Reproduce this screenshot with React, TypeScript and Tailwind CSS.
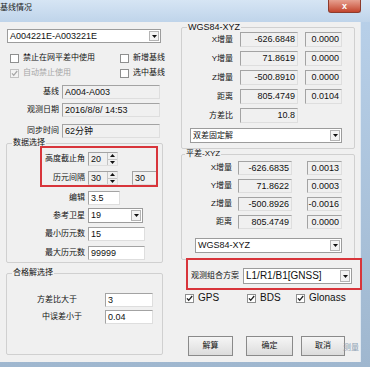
import type { ReactNode } from "react";

const edge = "border border-t-[#a3a3a3] border-l-[#a3a3a3] border-r-[#dedede] border-b-[#dedede]";

function Arrow({ up = false }: { up?: boolean }) {
  return (
    <svg width="5" height="3" viewBox="0 0 5 3" aria-hidden>
      <path d={up ? "M0 3h5L2.5 0z" : "M0 0h5L2.5 3z"} fill="#111" />
    </svg>
  );
}

function Field({
  value,
  className = "",
  white = false,
  right = false,
}: {
  value: string;
  className?: string;
  white?: boolean;
  right?: boolean;
}) {
  return (
    <div
      className={`flex shrink-0 items-center px-[2px] ${edge} ${white ? "bg-white" : "bg-[#f0f0f0]"} ${right ? "justify-end" : ""} ${className}`}
    >
      <span className="whitespace-nowrap text-[9px] leading-none">{value}</span>
    </div>
  );
}

function Combo({ value, className = "", big = false }: { value: string; className?: string; big?: boolean }) {
  return (
    <div className={`flex shrink-0 items-stretch border border-[#9c9c9c] bg-white ${className}`}>
      <span
        className={`flex flex-1 items-center whitespace-nowrap pl-[2px] leading-none ${big ? "text-[10px]" : "text-[9px]"}`}
      >
        {value}
      </span>
      <span className="m-[1px] flex w-[10px] items-center justify-center border border-[#b4b4b4] bg-[#f3f3f3]">
        <Arrow />
      </span>
    </div>
  );
}

function Spinner({ value }: { value: string }) {
  return (
    <div className={`flex h-[14px] w-[30px] shrink-0 items-stretch bg-[#f0f0f0] ${edge}`}>
      <span className="flex flex-1 items-center pl-[2px] text-[9px] leading-none">{value}</span>
      <span className="flex w-[10px] flex-col border-l border-[#c4c4c4]">
        <span className="flex flex-1 items-center justify-center border-b border-[#c4c4c4]">
          <Arrow up />
        </span>
        <span className="flex flex-1 items-center justify-center">
          <Arrow />
        </span>
      </span>
    </div>
  );
}

function Check({
  label,
  checked = false,
  disabled = false,
  latin = false,
  className = "",
}: {
  label: string;
  checked?: boolean;
  disabled?: boolean;
  latin?: boolean;
  className?: string;
}) {
  return (
    <div className={`flex items-center ${className}`}>
      <span
        className={`flex h-[9px] w-[9px] shrink-0 items-center justify-center border ${disabled ? "border-[#c2c2c2] bg-[#f3f3f3]" : "border-[#8e8f8f] bg-white"}`}
      >
        {checked && (
          <svg width="7" height="7" viewBox="0 0 7 7" aria-hidden>
            <path
              d="M1 3.4l1.7 1.9L6.2 1"
              stroke={disabled ? "#a8a8a8" : "#222"}
              strokeWidth="1.3"
              fill="none"
            />
          </svg>
        )}
      </span>
      <span
        className={`ml-[4px] whitespace-nowrap leading-none ${latin ? "text-[10px]" : "text-[8px]"} ${disabled ? "text-[#a6a6a6]" : ""}`}
      >
        {label}
      </span>
    </div>
  );
}

function Group({ title, className = "", children, latin = false, indent = "ml-[5px]" }: {
  title: string;
  className?: string;
  children: ReactNode;
  latin?: boolean;
  indent?: string;
}) {
  return (
    <fieldset className={`rounded-[2px] border border-[#d0d0d0] ${className}`}>
      <legend className={`${indent} px-[1px] leading-[10px] ${latin ? "text-[9px]" : "text-[8px]"}`}>{title}</legend>
      {children}
    </fieldset>
  );
}

function Button({ label, className = "" }: { label: string; className?: string }) {
  return (
    <div
      className={`flex h-[20px] shrink-0 items-center justify-center border border-[#8a8a8a] bg-gradient-to-b from-[#f6f6f6] to-[#dcdcdc] text-[8px] leading-none ${className}`}
    >
      {label}
    </div>
  );
}

function InfoRow({ label, value, className = "" }: { label: string; value: string; className?: string }) {
  return (
    <div className={`flex h-[14px] items-center ${className}`}>
      <span className="w-[59px] text-right text-[8px] leading-none">{label}</span>
      <Field value={value} className="ml-[3px] h-[14px] w-[98px]" />
    </div>
  );
}

function DataRow({ label, children, className = "" }: { label: string; children: ReactNode; className?: string }) {
  return (
    <div className={`flex items-center ${className}`}>
      <span className="w-[78px] text-right text-[8px] leading-none">{label}</span>
      <div className="ml-[3px] flex items-center">{children}</div>
    </div>
  );
}

function LeftColumn() {
  return (
    <div className="flex w-[181px] shrink-0 flex-col">
      <Combo value="A004221E-A003221E" className="ml-[7px] mt-[7px] h-[14px] w-[154px]" />

      <div className="mt-[9px] flex h-[12px] items-center">
        <Check label="禁止在网平差中使用" className="ml-[10px] w-[110px]" />
        <Check label="新增基线" />
      </div>
      <div className="mt-[3px] flex h-[12px] items-center">
        <Check label="自动禁止使用" checked disabled className="ml-[10px] w-[110px]" />
        <Check label="选中基线" />
      </div>

      <InfoRow label="基线" value="A004-A003" className="mt-[6px]" />
      <InfoRow label="观测日期" value="2016/8/8/ 14:53" className="mt-[4px]" />
      <InfoRow label="同步时间" value="62分钟" className="mt-[7px]" />

      <Group title="数据选择" className="ml-[6px] w-[157px] pb-[2px]">
        <DataRow label="高度截止角" className="mt-[4px] h-[14px]">
          <Spinner value="20" />
        </DataRow>
        <DataRow label="历元间隔" className="mt-[5px] h-[14px]">
          <Spinner value="30" />
          <Field value="30" className="ml-[14px] h-[14px] w-[25px]" />
        </DataRow>
        <DataRow label="编辑" className="mt-[6px] h-[14px]">
          <Field value="3.5" white className="h-[14px] w-[32px]" />
        </DataRow>
        <DataRow label="参考卫星" className="mt-[3px] h-[15px]">
          <Combo value="19" className="h-[15px] w-[55px]" />
        </DataRow>
        <DataRow label="最小历元数" className="mt-[4px] h-[14px]">
          <Field value="15" white className="h-[14px] w-[57px]" />
        </DataRow>
        <DataRow label="最大历元数" className="mt-[5px] h-[14px]">
          <Field value="99999" white className="h-[14px] w-[57px]" />
        </DataRow>
      </Group>

      <Group title="合格解选择" className="ml-[6px] mt-[5px] w-[157px] pb-[30px]">
        <div className="mt-[15px] flex h-[14px] items-center">
          <span className="w-[98px] pl-[30px] text-[8px] leading-none">方差比大于</span>
          <Field value="3" white className="h-[14px] w-[48px]" />
        </div>
        <div className="mt-[3px] flex h-[14px] items-center">
          <span className="w-[98px] pl-[35px] text-[8px] leading-none">中误差小于</span>
          <Field value="0.04" white className="h-[14px] w-[48px]" />
        </div>
      </Group>
    </div>
  );
}

function WgsRow({ label, a, b, className = "" }: { label: string; a: string; b?: string; className?: string }) {
  return (
    <div className={`flex h-[15px] items-center ${className}`}>
      <span className="w-[51px] text-right text-[8px] leading-none">{label}</span>
      <Field value={a} right className="ml-[7px] h-[15px] w-[58px]" />
      {b && <Field value={b} right className="ml-[7px] h-[15px] w-[37px]" />}
    </div>
  );
}

function AdjRow({ label, a, b, className = "" }: { label: string; a: string; b: string; className?: string }) {
  return (
    <div className={`flex h-[14px] items-center ${className}`}>
      <span className="w-[50px] text-right text-[8px] leading-none">{label}</span>
      <Field value={a} right className="ml-[6px] h-[14px] w-[54px]" />
      <Field value={b} right className="ml-[15px] h-[14px] w-[35px]" />
    </div>
  );
}

function RightColumn() {
  return (
    <div className="flex w-[180px] shrink-0 flex-col">
      <Group title="WGS84-XYZ" latin className="w-[174px] pb-[5px]">
        <WgsRow label="X增量" a="-626.6848" b="0.0000" />
        <WgsRow label="Y增量" a="71.8619" b="0.0000" className="mt-[4px]" />
        <WgsRow label="Z增量" a="-500.8910" b="0.0000" className="mt-[4px]" />
        <WgsRow label="距离" a="805.4749" b="0.0104" className="mt-[4px]" />
        <WgsRow label="方差比" a="10.8" className="mt-[4px]" />
        <Combo value="双差固定解" className="ml-[8px] mt-[5px] h-[15px] w-[152px] [&>span:first-child]:text-[8px]" />
      </Group>

      <Group title="平差-XYZ" indent="ml-[3px]" className="w-[174px] pb-[6px]">
        <AdjRow label="X增量" a="-626.6835" b="0.0013" className="mt-[2px]" />
        <AdjRow label="Y增量" a="71.8622" b="0.0003" className="mt-[4px]" />
        <AdjRow label="Z增量" a="-500.8926" b="-0.0016" className="mt-[4px]" />
        <AdjRow label="距离" a="805.4749" b="0.0000" className="mt-[4px]" />
        <Combo value="WGS84-XYZ" className="ml-[13px] mt-[9px] h-[15px] w-[147px]" />
      </Group>

      <div className="mt-[8px] flex h-[16px] items-center">
        <span className="w-[58px] text-right text-[8px] leading-none">观测组合方案</span>
        <Combo value="L1/R1/B1[GNSS]" big className="ml-[4px] h-[16px] w-[109px]" />
      </div>

      <div className="mt-[8px] flex h-[12px] items-center">
        <Check label="GPS" checked latin className="ml-[4px] w-[62px]" />
        <Check label="BDS" checked latin className="w-[49px]" />
        <Check label="Glonass" checked latin />
      </div>

      <div className="mt-[32px] flex">
        <Button label="解算" className="ml-[7px] w-[45px]" />
        <Button label="确定" className="ml-[13px] w-[47px]" />
        <Button label="取消" className="ml-[8px] w-[44px]" />
      </div>
    </div>
  );
}

export default function App() {
  return (
    <div className="relative h-[367px] w-[370px] overflow-hidden bg-gradient-to-b from-[#b9d1ea] to-[#9fb7cf] font-['Liberation_Sans','Noto_Sans_CJK_SC',sans-serif] text-[#111]">
      <div className="flex h-[22px] items-start justify-between bg-gradient-to-b from-[#d6e5f4] to-[#bfd4ea]">
        <span className="pt-[3px] text-[8px] leading-[10px] text-[#1b1b1b]">基线情况</span>
        <div className="mr-[9px] flex h-[13px] w-[33px] items-center justify-center rounded-b-[3px] border border-t-0 border-[#8d3b2c] bg-gradient-to-b from-[#e6a090] to-[#c2432c] text-[9px] font-bold leading-none text-white">
          x
        </div>
      </div>

      <div className="flex h-[340px] w-[361px] border-r border-[#dfe8f1] bg-[#f0f0f0]">
        <LeftColumn />
        <RightColumn />
      </div>

      {/* red annotation boxes drawn over the dialog */}
      <div className="pointer-events-none absolute left-[40px] top-[146px] h-[41px] w-[118px] border-2 border-[#d8353b]" />
      <div className="pointer-events-none absolute left-[186px] top-[258px] h-[32px] w-[176px] border-2 border-[#d8353b]" />
      <span className="pointer-events-none absolute left-[343px] top-[344px] text-[8px] leading-none text-[#8d9fb4]">
        测量
      </span>
    </div>
  );
}
